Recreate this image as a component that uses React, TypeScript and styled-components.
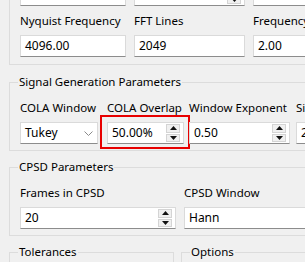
import styled, { createGlobalStyle } from "styled-components";

const Global = createGlobalStyle`
  html, body {
    margin: 0;
    padding: 0;
    background: #f0f0f0;
  }
  body {
    font-family: "Noto Sans", "Open Sans", sans-serif;
    font-size: 11.5px;
    color: #000;
  }
`;

const Page = styled.div`
  width: 305px;
  height: 262px;
  overflow: hidden;
  background: #f0f0f0;
`;

const Stack = styled.div`
  width: 420px;
  margin-left: 9px;
  display: flex;
  flex-direction: column;
`;

const Group = styled.fieldset<{ $gap?: number }>`
  margin: ${(p) => p.$gap ?? 0}px 0 0 0;
  padding: 10px 10px 6px 10px;
  border: 1px solid #dcdcdc;
  min-width: 0;
`;

const Title = styled.legend`
  padding: 0 1px;
  margin-left: -2px;
  line-height: 16px;
`;

const ClippedGroup = styled.div`
  margin-top: -16px;
  border: 1px solid #dcdcdc;
  border-top: none;
  padding: 0 10px 7px 10px;
  display: flex;
  flex-direction: column;
  gap: 7px;
`;

const Row = styled.div<{ $cols: string; $gap?: number }>`
  display: grid;
  grid-template-columns: ${(p) => p.$cols};
  column-gap: ${(p) => p.$gap ?? 8}px;
`;

const Field = styled.div<{ $shift?: number }>`
  position: relative;
  display: flex;
  flex-direction: column;
  gap: 6px;
  min-width: 0;
  margin-left: ${(p) => p.$shift ?? 0}px;
`;

const Label = styled.div`
  line-height: 16px;
  white-space: nowrap;
`;

const Box = styled.div`
  position: relative;
  height: 22px;
  box-sizing: border-box;
  background: #fff;
  border: 1px solid #dadada;
  border-bottom-color: #8c8c8c;
  display: flex;
  align-items: center;
  padding-left: 4px;
  line-height: 16px;
  font-size: 12px;
  white-space: nowrap;
  overflow: hidden;
`;

const Spin = styled.div`
  position: absolute;
  right: 3px;
  top: 1px;
  bottom: 1px;
  width: 14px;
  display: flex;
  flex-direction: column;
  gap: 1px;
`;

const SpinBtn = styled.div`
  flex: 1;
  background: #f0f0f0;
  border: 1px solid #d4d4d4;
  display: flex;
  align-items: center;
  justify-content: center;
`;

const Chevron = styled.svg`
  position: absolute;
  right: 4px;
  top: 8px;
`;

const Highlight = styled.div`
  position: absolute;
  left: -7px;
  top: 15px;
  width: 90px;
  height: 34px;
  box-sizing: border-box;
  border: 2px solid #e80000;
  pointer-events: none;
`;

const Spacer = styled.div`
  height: 40px;
`;

function Arrow({ down }: { down?: boolean }) {
  return (
    <svg width="7" height="4" viewBox="0 0 7 4">
      <path d={down ? "M0 0h7L3.5 4z" : "M0 4h7L3.5 0z"} fill="#111" />
    </svg>
  );
}

function SpinBox({ value }: { value: string }) {
  return (
    <Box>
      {value}
      <Spin>
        <SpinBtn>
          <Arrow />
        </SpinBtn>
        <SpinBtn>
          <Arrow down />
        </SpinBtn>
      </Spin>
    </Box>
  );
}

function Combo({ value }: { value: string }) {
  return (
    <Box>
      {value}
      <Chevron width="9" height="5" viewBox="0 0 9 5">
        <path d="M0.5 0.5L4.5 4.5L8.5 0.5" fill="none" stroke="#8a8a8a" />
      </Chevron>
    </Box>
  );
}

export default function App() {
  return (
    <Page>
      <Global />
      <Stack>
        <ClippedGroup>
          <Row $cols="106px 111px 120px">
            <Box />
            <SpinBox value="" />
            <Box />
          </Row>
          <Row $cols="106px 111px 120px">
            <Field>
              <Label>Nyquist Frequency</Label>
              <Box>4096.00</Box>
            </Field>
            <Field>
              <Label>FFT Lines</Label>
              <Box>2049</Box>
            </Field>
            <Field>
              <Label>Frequency Resolution</Label>
              <Box>2.00</Box>
            </Field>
          </Row>
        </ClippedGroup>

        <Group $gap={9}>
          <Title>Signal Generation Parameters</Title>
          <Row $cols="78px 85px 105px 100px" $gap={1}>
            <Field>
              <Label>COLA Window</Label>
              <Combo value="Tukey" />
            </Field>
            <Field $shift={8}>
              <Label>COLA Overlap</Label>
              <SpinBox value="50.00%" />
              <Highlight />
            </Field>
            <Field $shift={4}>
              <Label>Window Exponent</Label>
              <SpinBox value="0.50" />
            </Field>
            <Field $shift={5}>
              <Label>Signal Length</Label>
              <Box>2</Box>
            </Field>
          </Row>
        </Group>

        <Group $gap={8}>
          <Title>CPSD Parameters</Title>
          <Row $cols="156px 160px">
            <Field>
              <Label>Frames in CPSD</Label>
              <SpinBox value="20" />
            </Field>
            <Field>
              <Label>CPSD Window</Label>
              <Combo value="Hann" />
            </Field>
          </Row>
        </Group>

        <Row $cols="165px 200px" $gap={7} style={{ marginTop: "8px" }}>
          <Group>
            <Title>Tolerances</Title>
            <Spacer />
          </Group>
          <Group>
            <Title>Options</Title>
            <Spacer />
          </Group>
        </Row>
      </Stack>
    </Page>
  );
}
